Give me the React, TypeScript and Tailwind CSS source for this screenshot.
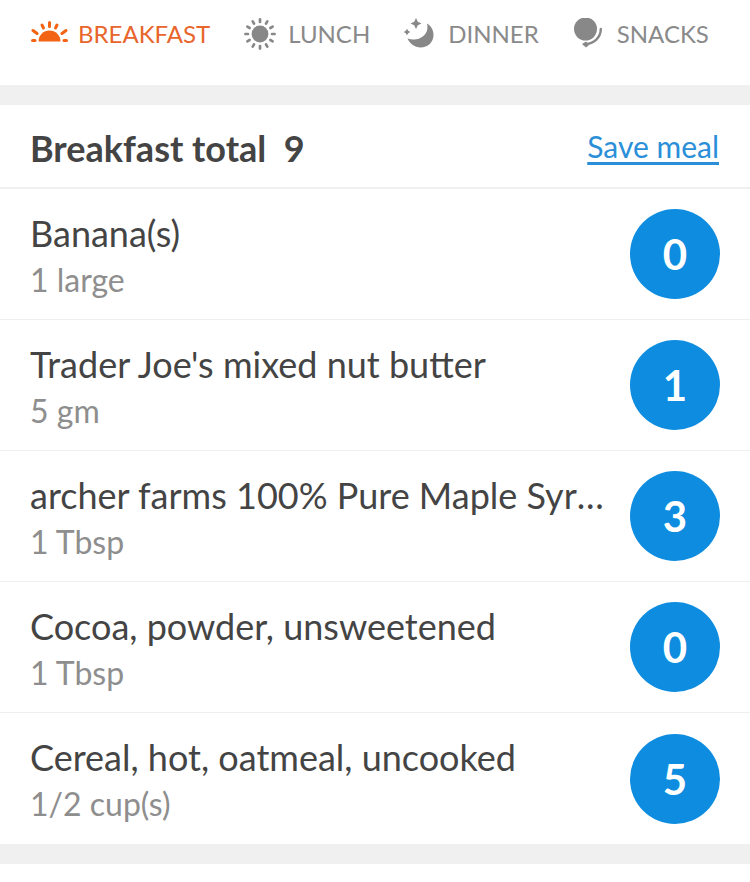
import React from 'react';

const foods = [
  { name: 'Banana(s)', amount: '1 large', points: 0 },
  { name: "Trader Joe's mixed nut butter", amount: '5 gm', points: 1 },
  { name: 'archer farms 100% Pure Maple Syrup', amount: '1 Tbsp', points: 3 },
  { name: 'Cocoa, powder, unsweetened', amount: '1 Tbsp', points: 0 },
  { name: 'Cereal, hot, oatmeal, uncooked', amount: '1/2 cup(s)', points: 5 },
];

function SunriseIcon() {
  return (
    <svg width="37" height="26" viewBox="0 0 37 26" className="shrink-0">
      <path d="M7.5 20.5 A11 11 0 0 1 29.5 20.5 Z" fill="#f26414" />
      <g stroke="#f26414" strokeWidth="3" strokeLinecap="round">
        <line x1="18.5" y1="1.5" x2="18.5" y2="5.5" />
        <line x1="26" y1="4" x2="24.5" y2="7" />
        <line x1="11" y1="4" x2="12.5" y2="7" />
        <line x1="35" y1="9.5" x2="31" y2="12.5" />
        <line x1="2" y1="9.5" x2="6" y2="12.5" />
        <line x1="33" y1="19.5" x2="35.5" y2="19.5" />
        <line x1="1.5" y1="19.5" x2="4" y2="19.5" />
      </g>
    </svg>
  );
}

function SunIcon() {
  const angles = [0, 30, 60, 90, 120, 150, 180, 210, 240, 270, 300, 330];
  return (
    <svg width="32" height="32" viewBox="0 0 32 32" className="shrink-0">
      <circle cx="16" cy="16" r="8.4" fill="#888888" />
      <g stroke="#888888" strokeWidth="2.7" strokeLinecap="round">
        {angles.map((a) => {
          const r = (a * Math.PI) / 180;
          return (
            <line
              key={a}
              x1={16 + Math.cos(r) * 12}
              y1={16 - Math.sin(r) * 12}
              x2={16 + Math.cos(r) * 14.6}
              y2={16 - Math.sin(r) * 14.6}
            />
          );
        })}
      </g>
    </svg>
  );
}

function MoonIcon() {
  return (
    <svg width="32" height="32" viewBox="0 0 32 32" className="shrink-0">
      <path d="M24 5.5 C28.5 8 30.5 12.5 30.5 17 C30.5 24 25 29.5 17.5 29.5 C12 29.5 7 26 4.5 20.5 C14.5 24 27 18 24 5.5 Z" fill="#888888" />
      <path d="M13 0 L14.8 3.7 L18.5 5.5 L14.8 7.3 L13 11 L11.2 7.3 L7.5 5.5 L11.2 3.7 Z" fill="#888888" />
      <path d="M4 10.7 L5.2 12.8 L7.3 14 L5.2 15.2 L4 17.3 L2.8 15.2 L0.7 14 L2.8 12.8 Z" fill="#888888" />
    </svg>
  );
}

function SnackIcon() {
  return (
    <svg width="28" height="32" viewBox="0 0 28 32" className="shrink-0">
      <circle cx="11.5" cy="11" r="11.5" fill="#888888" />
      <path d="M26.8 11 C26.8 19 20.5 25.5 12 26" fill="none" stroke="#888888" strokeWidth="2.4" strokeLinecap="round" />
      <path d="M8 26 L12 23.5 L15 27 L12 29.5 Z" fill="#888888" />
    </svg>
  );
}

export default function App() {
  return (
    <div className="w-[750px] h-[882px] bg-white overflow-hidden font-['Lato','Liberation_Sans',sans-serif]">
      <div className="h-[85px] flex pl-[31px] pt-[18px]">
        <div className="flex items-center gap-[10px] h-[32px] text-[24px] text-[#e8652b]">
          <SunriseIcon />
          <span>BREAKFAST</span>
        </div>
        <div className="flex items-center gap-[12px] h-[32px] ml-[34px] text-[24px] text-[#8a8a8a]">
          <SunIcon />
          <span>LUNCH</span>
        </div>
        <div className="flex items-center gap-[13px] h-[32px] ml-[33px] text-[24px] text-[#8a8a8a]">
          <MoonIcon />
          <span>DINNER</span>
        </div>
        <div className="flex items-center gap-[15px] h-[32px] ml-[35px] text-[24px] text-[#8a8a8a]">
          <SnackIcon />
          <span>SNACKS</span>
        </div>
      </div>

      <div className="h-[20px] bg-[#f0f0f0]" />

      <div className="h-[84px] flex items-center justify-between pl-[30px] pr-[31px] pt-[4px] border-b-2 border-[#f0f0f0]">
        <div className="text-[36px] font-bold text-[#444444] whitespace-pre">Breakfast total  9</div>
        <a href="#" className="text-[30px] text-[#2a8fd8] underline underline-offset-4 -mt-[3px]">Save meal</a>
      </div>

      {foods.map((food, i) => (
        <div key={i} className={`h-[131px] flex items-center pl-[30px] pr-[30px] ${i < foods.length - 1 ? 'border-b border-[#efefef]' : ''}`}>
          <div className="flex-1 min-w-0 pr-[20px] pt-[2px]">
            <div className="text-[36px] leading-[44px] text-[#444444] truncate">{food.name}</div>
            <div className="text-[32px] leading-[40px] mt-[5px] text-[#8e8e8e]">{food.amount}</div>
          </div>
          <div className="w-[90px] h-[90px] rounded-full bg-[#0d8ce0] flex items-center justify-center pt-[1px] text-[42px] font-bold text-white shrink-0">
            {food.points}
          </div>
        </div>
      ))}

      <div className="h-[20px] bg-[#f0f0f0]" />
    </div>
  );
}
